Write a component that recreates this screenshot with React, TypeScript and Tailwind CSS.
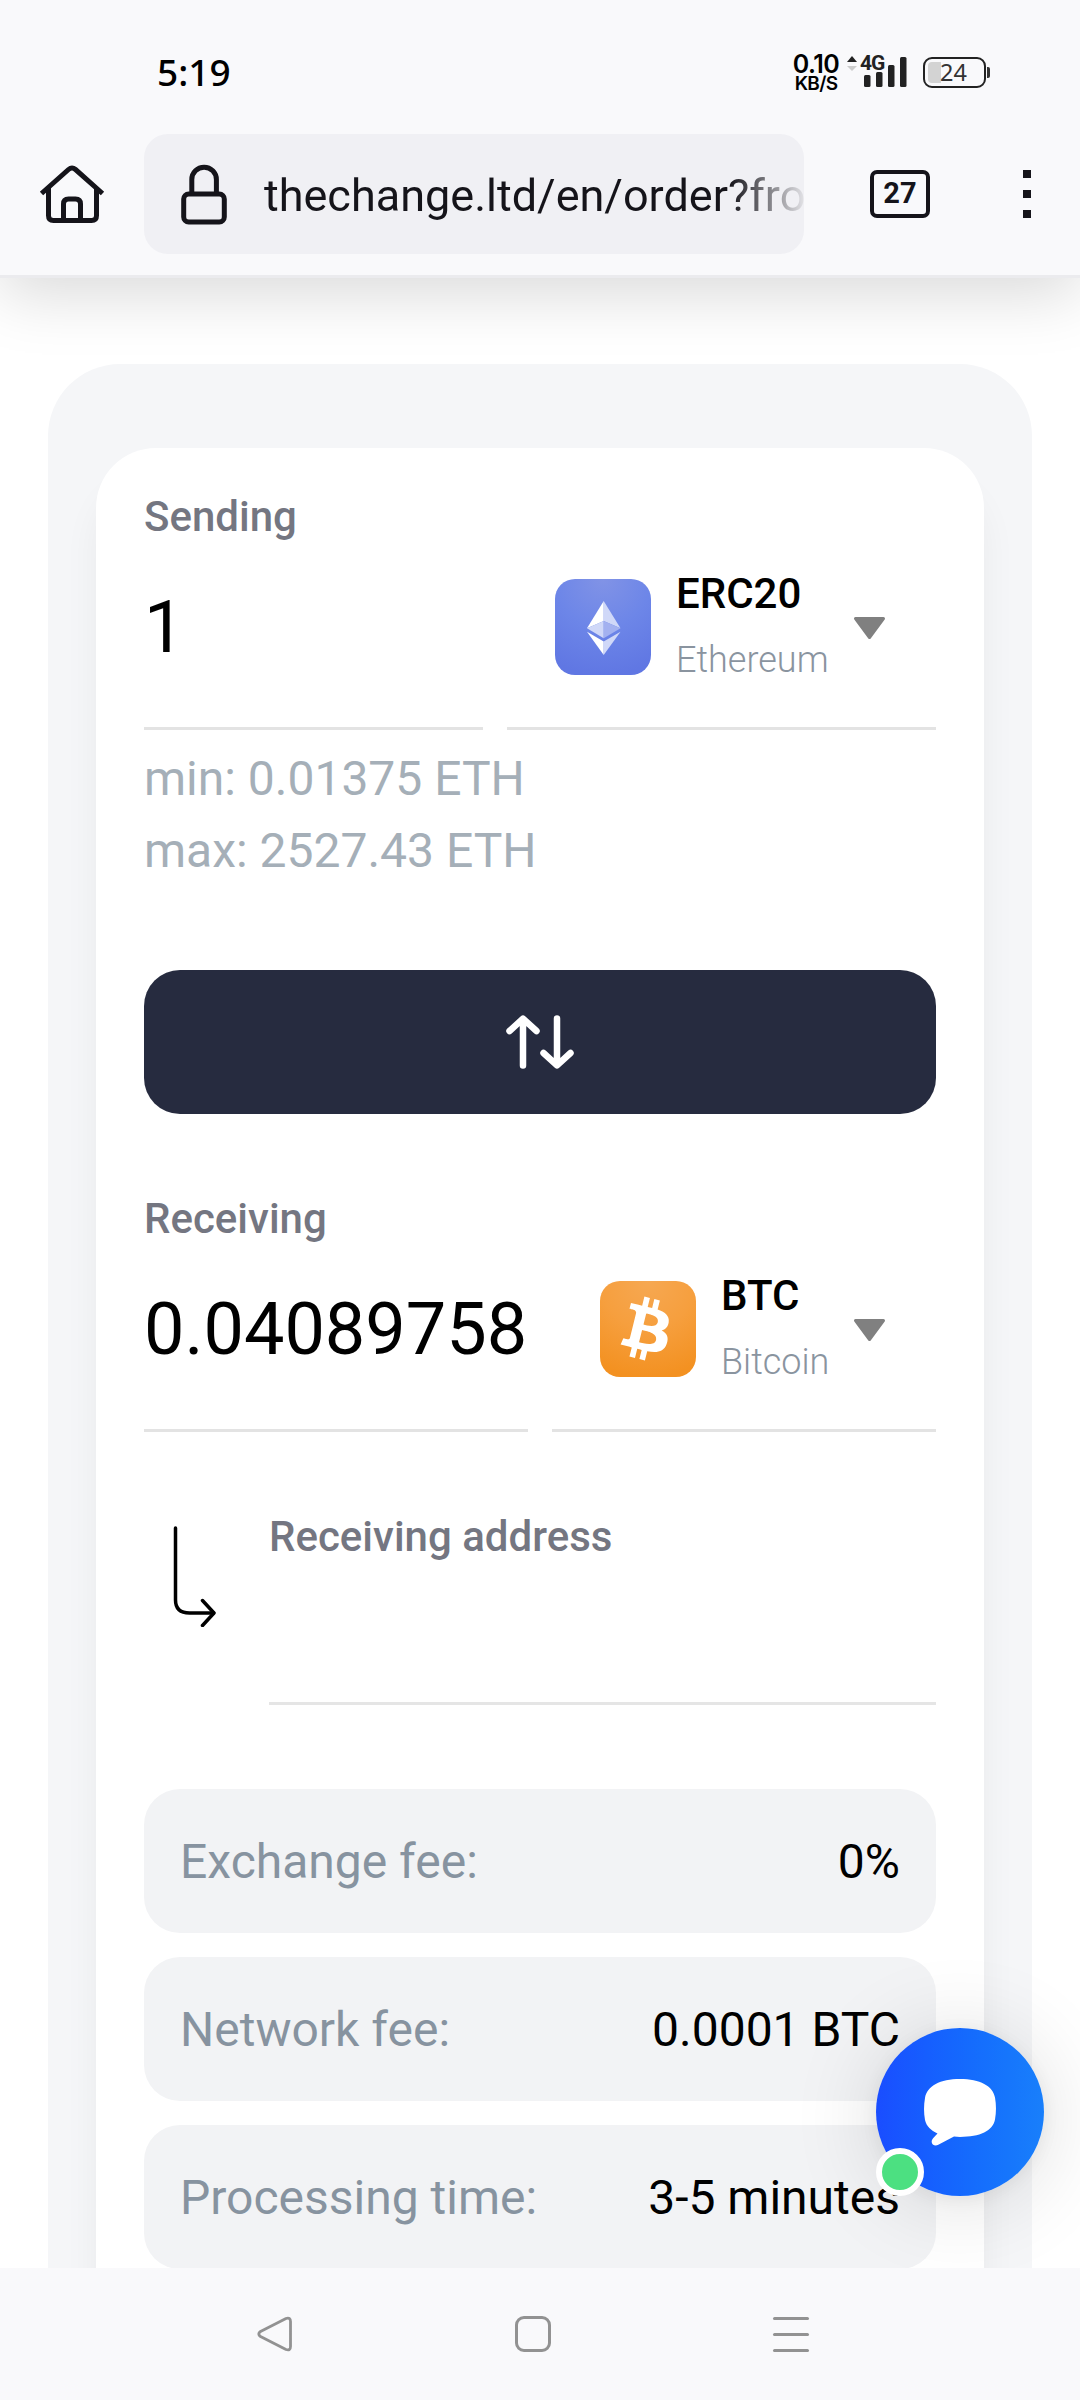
import React from "react";

interface Currency {
  code: string;
  name: string;
  icon: React.ReactNode;
}

interface AmountFieldProps {
  label: string;
  amount: string;
  currency: Currency;
  columns: string;
}

function EthIcon() {
  return (
    <svg className="size-24 shrink-0" viewBox="0 0 96 96">
      <defs>
        <radialGradient id="eth-bg" cx="0.5" cy="0" r="1">
          <stop offset="0" stopColor="#8193e6" />
          <stop offset="0.5" stopColor="#6d86e8" />
          <stop offset="1" stopColor="#6077e3" />
        </radialGradient>
      </defs>
      <rect width="96" height="96" rx="20" fill="url(#eth-bg)" />
      <path d="M48.7 22L32 49.2l16.7-7.3z" fill="#fff" />
      <path d="M48.7 22v19.9l16.8 7.3z" fill="#d0d8f8" />
      <path d="M48.7 41.9L32 49.2l16.7 10z" fill="#d0d8f8" />
      <path d="M48.7 41.9v17.3l16.8-10z" fill="#a3b1f0" />
      <path d="M32 52.8l16.7 9.6V76z" fill="#fff" />
      <path d="M65.5 52.8l-16.8 9.6V76z" fill="#d0d8f8" />
    </svg>
  );
}

function BtcIcon() {
  return (
    <svg className="size-24 shrink-0" viewBox="0 0 96 96">
      <defs>
        <radialGradient id="btc-bg" cx="0.5" cy="0" r="1">
          <stop offset="0" stopColor="#f6a852" />
          <stop offset="0.5" stopColor="#f69f3e" />
          <stop offset="1" stopColor="#f39121" />
        </radialGradient>
      </defs>
      <rect width="96" height="96" rx="20" fill="url(#btc-bg)" />
      <g transform="translate(-5.500 -3.6) scale(3.2)">
        <path
          fill="#fff"
          d="M23.189 14.02c.314-2.096-1.283-3.223-3.465-3.975l.708-2.84-1.728-.43-.69 2.765c-.454-.114-.92-.22-1.385-.326l.695-2.783L15.596 6l-.708 2.839c-.376-.086-.746-.17-1.104-.26l.002-.009-2.384-.595-.46 1.846s1.283.294 1.256.312c.7.175.826.638.805 1.006l-.806 3.235c.048.012.11.03.18.057l-.183-.045-1.13 4.532c-.086.212-.303.531-.793.41.018.025-1.256-.313-1.256-.313l-.858 1.978 2.25.561c.418.105.828.215 1.231.318l-.715 2.872 1.727.43.708-2.84c.472.127.93.245 1.378.357l-.706 2.828 1.728.43.715-2.866c2.948.558 5.164.333 6.097-2.333.752-2.146-.037-3.385-1.588-4.192 1.13-.26 1.98-1.003 2.207-2.538zm-3.95 5.538c-.533 2.147-4.148.986-5.32.695l.95-3.805c1.172.293 4.929.872 4.37 3.11zm.535-5.569c-.487 1.953-3.495.96-4.47.717l.86-3.45c.975.243 4.118.696 3.61 2.733z"
        />
      </g>
    </svg>
  );
}

const ethereum: Currency = { code: "ERC20", name: "Ethereum", icon: <EthIcon /> };
const bitcoin: Currency = { code: "BTC", name: "Bitcoin", icon: <BtcIcon /> };

const details = [
  { label: "Exchange fee:", value: "0%" },
  { label: "Network fee:", value: "0.0001 BTC" },
  { label: "Processing time:", value: "3-5 minutes" },
];

function StatusBar() {
  return (
    <div className="flex h-[134px] items-start pt-[54px] pr-[90px] pl-[157px]">
      <span className="-mt-px font-['Noto_Sans'] text-[37px] leading-[38px] font-medium">
        5:19
      </span>
      <div className="ml-auto flex w-[46px] flex-col items-center font-['Inter'] whitespace-nowrap">
        <span className="text-[25px] leading-[20px] font-semibold tracking-[-0.5px]">
          0.10
        </span>
        <span className="text-[19px] leading-[20px] font-semibold tracking-[-0.7px]">
          KB/S
        </span>
      </div>
      <div className="relative ml-[6px] h-[36px] w-[62px]">
        <svg className="h-[36px] w-[62px]" viewBox="0 0 62 36">
          <path d="M2 8l5-6 5 6z" fill="#222" />
          <path d="M2 12l5 5 5-5z" fill="#ccc" />
          <g fill="#222">
            <rect x="19" y="21" width="6.5" height="12" rx="1.5" />
            <rect x="31" y="18" width="6.5" height="15" rx="1.5" />
            <rect x="43" y="11" width="6.5" height="22" rx="1.5" />
            <rect x="55" y="3" width="6.5" height="30" rx="1.5" />
          </g>
        </svg>
        <span className="absolute top-0 left-[15px] font-['Roboto'] text-[21px] leading-[18px] font-bold tracking-[-1px] text-[#222]">
          4G
        </span>
      </div>
      <div className="mt-[3px] ml-[16px] flex items-center gap-px">
        <div className="relative h-[31px] w-[63px] rounded-[9px] border-2 border-[#222]">
          <div className="absolute top-[3px] left-[3px] h-[21px] w-[13px] rounded-l-[4px] bg-[#d3d3d3]" />
          <span className="absolute -top-px left-[15px] font-['Noto_Sans'] text-[23.5px] leading-[28px] text-[#333]">
            24
          </span>
        </div>
        <div className="h-[11px] w-[3px] rounded-r-[2px] bg-[#333]" />
      </div>
    </div>
  );
}

function AddressBar() {
  return (
    <div className="flex h-[120px] items-center text-[#15141a]">
      <svg
        className="mb-1 ml-[39px] size-[66px]"
        viewBox="0 0 66 66"
        fill="none"
        stroke="currentColor"
        strokeWidth="5"
      >
        <path d="M2.5 34.5L29.5 10.5q3.5-3 7 0l27 24" />
        <path d="M9.5 29v27.5q0 5 5 5h38q5 0 5-5V29" />
        <path d="M24.5 61V45q0-5 5-5h7q5 0 5 5v16" />
      </svg>
      <div className="ml-[39px] flex h-[120px] w-[660px] items-center overflow-hidden rounded-3xl bg-[#f0f0f4] pl-[37px]">
        <svg
          className="h-[61px] w-[46px] shrink-0"
          viewBox="0 0 46 61"
          fill="none"
          stroke="currentColor"
          strokeWidth="5"
        >
          <rect x="2.7" y="30" width="40.6" height="28" rx="5" />
          <path d="M10.8 30V15.5a12.3 12.3 0 0124.6 0V30" />
        </svg>
        <span className="ml-[37px] w-[540px] overflow-hidden mask-r-from-[466px] mask-r-to-[545px] pt-[3px] text-[45px] whitespace-nowrap">
          thechange.ltd/en/order?from
        </span>
      </div>
      <div className="ml-[66px] flex h-12 w-[60px] items-center justify-center rounded-[7px] border-4 border-[#15141a] text-[29px] font-bold">
        27
      </div>
      <div className="ml-[93px] flex flex-col gap-3">
        <div className="size-2 bg-[#15141a]" />
        <div className="size-2 bg-[#15141a]" />
        <div className="size-2 bg-[#15141a]" />
      </div>
    </div>
  );
}

function AmountField({ label, amount, currency, columns }: AmountFieldProps) {
  return (
    <div>
      <p className="text-[42px] leading-[48px] font-medium text-[#747681]">
        {label}
      </p>
      <div className={`grid h-[189px] gap-6 ${columns}`}>
        <div className="flex items-center border-b-3 border-[#e3e3e3] pb-[12px] text-[72px]">
          {amount}
        </div>
        <div className="flex items-center border-b-3 border-[#e3e3e3] pb-[14px] pl-12">
          {currency.icon}
          <div className="ml-[25px] leading-[66px]">
            <p className="text-[42px] font-medium">{currency.code}</p>
            <p className="text-[36px] font-light text-[#8a949f]">
              {currency.name}
            </p>
          </div>
          <svg
            className="mt-0.5 mr-[50px] ml-auto h-6 w-[33px]"
            viewBox="0 0 33 24"
          >
            <path
              d="M2.5 2.5h28l-14 19z"
              fill="#808080"
              stroke="#808080"
              strokeWidth="3"
              strokeLinejoin="round"
            />
          </svg>
        </div>
      </div>
    </div>
  );
}

function ChatButton() {
  return (
    <button className="absolute right-9 bottom-[72px] flex size-[168px] items-center justify-center rounded-full bg-linear-to-r from-[#1a4dff] to-[#197ffb] shadow-[0_6px_90px_rgba(0,0,0,0.14),0_3px_18px_rgba(0,0,0,0.06)]">
      <svg className="h-[68px] w-[72px]" viewBox="0 0 72 68">
        <path
          d="M36 1C16 1 3 8 1 20c-1.300 7-1.300 15 0 22 1.500 6.500 6 10.500 12.500 13.500L9.300 60c-4 4.500 0 9 5 6.800L30 58.500c2 .3 4 .4 6 .4 20 0 33-6 35-17.400 1.300-7 1.300-15 0-22C69 8 56 1 36 1z"
          fill="#fff"
        />
      </svg>
      <span className="absolute bottom-0 left-0 size-12 rounded-full border-6 border-white bg-[#4ce081]" />
    </button>
  );
}

export default function App() {
  return (
    <div className="flex h-[2400px] w-[1080px] flex-col overflow-hidden bg-white font-['Roboto',sans-serif] text-black">
      {/* Status bar and browser toolbar */}
      <header className="relative z-10 h-[278px] shrink-0 border-b-3 border-[#ebebee] bg-[#f9f9fb] shadow-[0_16px_60px_rgba(0,0,0,0.15)]">
        <StatusBar />
        <AddressBar />
      </header>

      {/* Order page */}
      <main className="relative min-h-0 flex-1 overflow-hidden px-12 pt-[86px]">
        <div className="h-[2100px] rounded-t-[72px] bg-[#f5f6f8] px-12 pt-[84px]">
          <div className="h-[2016px] rounded-t-[60px] bg-white px-12 pt-[45px] shadow-[0_36px_36px_rgba(0,0,0,0.05)]">
            <AmountField
              label="Sending"
              amount="1"
              currency={ethereum}
              columns="grid-cols-[339px_429px]"
            />
            <div className="mt-[13px] text-[48px] leading-[72px] text-[#a5afb8]">
              <p>min: 0.01375 ETH</p>
              <p>max: 2527.43 ETH</p>
            </div>

            <button className="mt-[83px] flex h-36 w-full items-center justify-center rounded-[36px] bg-[#262b3f]">
              <svg
                className="h-[56px] w-[70px]"
                viewBox="0 0 70 56"
                fill="none"
                stroke="#fff"
                strokeWidth="6.500"
                strokeLinecap="round"
                strokeLinejoin="round"
              >
                <path d="M18 51.500V5M4.500 17L18 4.700 31.500 17" />
                <path d="M52 4.500V51M38.500 39L52 51.300 65.500 39" />
              </svg>
            </button>

            <div className="mt-[81px]">
              <AmountField
                label="Receiving"
                amount="0.04089758"
                currency={bitcoin}
                columns="grid-cols-[384px_384px]"
              />
            </div>

            {/* Receiving address */}
            <div className="mt-[81px] flex h-[192px]">
              <svg
                className="mt-[12px] ml-[29px] h-[102px] w-[45px]"
                viewBox="0 0 45 102"
                fill="none"
                stroke="#000"
                strokeWidth="3.500"
                strokeLinecap="round"
                strokeLinejoin="round"
              >
                <path d="M2.500 3v72q0 13 14 13h24" />
                <path d="M29.500 75.500L41 88 29.500 100.500" />
              </svg>
              <div className="ml-auto w-[667px] border-b-3 border-[#e5e5e5] text-[42px] leading-[48px] font-medium text-[#747681]">
                Receiving address
              </div>
            </div>

            <div className="mt-[84px] flex flex-col gap-6">
              {details.map((item) => (
                <div
                  key={item.label}
                  className="flex h-36 items-center justify-between rounded-[36px] bg-[#f2f3f5] px-9 pt-0.5 text-[48px]"
                >
                  <span className="text-[#8793a0]">{item.label}</span>
                  <span>{item.value}</span>
                </div>
              ))}
            </div>
          </div>
        </div>
        <ChatButton />
      </main>

      {/* System navigation */}
      <nav className="flex h-[132px] shrink-0 items-center bg-[#f9f9fb] pl-[257px] text-[#929292]">
        <svg
          className="h-9 w-9"
          viewBox="0 0 36 36"
          fill="none"
          stroke="currentColor"
          strokeWidth="2.800"
          strokeLinejoin="round"
        >
          <path d="M3.500 15.500L29 2.500q4.500-1.500 4.500 3v25q0 4.500-4.500 3L3.500 20.500q-3.500-2.500 0-5z" />
        </svg>
        <div className="ml-[222px] size-9 rounded-[9px] border-3 border-current" />
        <div className="ml-[222px] flex w-9 flex-col gap-[13px]">
          <div className="h-[3px] rounded-sm bg-current" />
          <div className="h-[3px] rounded-sm bg-current" />
          <div className="h-[3px] rounded-sm bg-current" />
        </div>
      </nav>
    </div>
  );
}
